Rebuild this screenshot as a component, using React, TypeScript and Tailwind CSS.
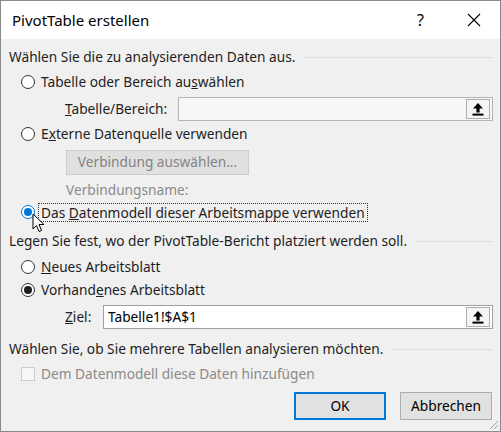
import React from 'react';

const font = { fontFamily: '"Noto Sans", "Open Sans", sans-serif' };

function Radio({ checked, focused }: { checked?: boolean; focused?: boolean }) {
  const ring = focused ? 'border-[#0078d7]' : 'border-[#333333]';
  const dot = focused ? 'bg-[#0078d7]' : 'bg-[#1f1f1f]';
  return (
    <span className={`flex h-[14px] w-[14px] shrink-0 items-center justify-center rounded-full border bg-white ${ring}`}>
      {checked && <span className={`h-[8px] w-[8px] rounded-full ${dot}`} />}
    </span>
  );
}

function UploadBtn() {
  return (
    <div className="mx-[2px] flex h-[20px] w-[24px] items-center justify-center border border-[#adadad] bg-[#f5f5f5]">
      <svg width="12" height="14" viewBox="0 0 12 14">
        <path d="M6 1 L11 6.5 L7.6 6.5 L7.6 10.5 L4.4 10.5 L4.4 6.5 L1 6.5 Z" fill="#000" />
        <rect x="0.5" y="11.6" width="11" height="2" fill="#000" />
      </svg>
    </div>
  );
}

function Header({ text }: { text: string }) {
  return (
    <div className="flex h-[20px] items-center gap-[8px] text-[#1e1e1e]">
      <span className="whitespace-nowrap">{text}</span>
      <span className="h-px flex-1 bg-[#dcdcdc]" />
    </div>
  );
}

function Cursor() {
  return (
    <svg className="absolute left-[31px] top-[212px]" width="13" height="21" viewBox="0 0 13 21">
      <path d="M1 1 L1 16 L4.5 12.5 L7 18.5 L9.5 17.5 L7 11.5 L12 11.5 Z" fill="#fff" stroke="#000" strokeWidth="1" />
    </svg>
  );
}

export default function App() {
  return (
    <div className="relative flex h-[432px] w-[501px] flex-col border border-[#8a8a8a] bg-[#f0f0f0]" style={font}>
      <div className="flex h-[38px] shrink-0 items-center bg-white pl-[11px] text-[15px] text-black">
        <span className="flex-1">PivotTable erstellen</span>
        <span className="w-[30px] text-[16px]">?</span>
        <svg className="mr-[19px] ml-[20px]" width="14" height="14" viewBox="0 0 14 14">
          <path d="M1 1 L13 13 M13 1 L1 13" stroke="#000" strokeWidth="1.1" />
        </svg>
      </div>

      <div className="flex flex-col pl-[8px] pr-[7px] text-[13.7px] text-[#1e1e1e]">
        <div className="mt-[8px]">
          <Header text="Wählen Sie die zu analysierenden Daten aus." />
        </div>

        <div className="mt-[5px] flex h-[20px] items-center gap-[6px] pl-[12px]">
          <Radio />
          <span>Tabelle oder Bereich au<u>s</u>wählen</span>
        </div>

        <div className="mt-[5px] flex h-[24px] items-center pl-[56px]">
          <span className="w-[113px]"><u>T</u>abelle/Bereich:</span>
          <div className="flex h-[24px] flex-1 items-center border border-[#b4b4b4] bg-[#f7f7f7]">
            <span className="flex-1" />
            <UploadBtn />
          </div>
        </div>

        <div className="mt-[3px] flex h-[20px] items-center gap-[6px] pl-[12px]">
          <Radio />
          <span>E<u>x</u>terne Datenquelle verwenden</span>
        </div>

        <div className="mt-[6px] pl-[57px]">
          <div className="flex h-[25px] w-[183px] items-center justify-center border border-[#cccccc] bg-[#e0e0e0] text-[#838383]">
            Verbindung auswählen...
          </div>
        </div>

        <div className="mt-[5px] flex h-[20px] items-center pl-[57px] text-[#8a8a8a]">Verbindungsname:</div>

        <div className="mt-[2px] flex h-[20px] items-center gap-[3px] pl-[12px]">
          <Radio checked focused />
          <span className="border border-dotted border-[#333] px-[2px] leading-[17px]">
            Das <u>D</u>atenmodell dieser Arbeitsmappe verwenden
          </span>
        </div>

        <div className="mt-[9px]">
          <Header text="Legen Sie fest, wo der PivotTable-Bericht platziert werden soll." />
        </div>

        <div className="mt-[6px] flex h-[20px] items-center gap-[6px] pl-[12px]">
          <Radio />
          <span><u>N</u>eues Arbeitsblatt</span>
        </div>

        <div className="mt-[3px] flex h-[20px] items-center gap-[6px] pl-[12px]">
          <Radio checked />
          <span>Vorhand<u>e</u>nes Arbeitsblatt</span>
        </div>

        <div className="mt-[5px] flex h-[24px] items-center pl-[56px]">
          <span className="w-[38px]"><u>Z</u>iel:</span>
          <div className="flex h-[24px] flex-1 items-center border border-[#a0a0a0] bg-white">
            <span className="flex-1 pl-[4px] text-black">Tabelle1!$A$1</span>
            <UploadBtn />
          </div>
        </div>

        <div className="mt-[10px]">
          <Header text="Wählen Sie, ob Sie mehrere Tabellen analysieren möchten." />
        </div>

        <div className="mt-[5px] flex h-[20px] items-center gap-[6px] pl-[12px] text-[#8a8a8a]">
          <span className="h-[14px] w-[14px] shrink-0 border border-[#cccccc] bg-[#f7f7f7]" />
          <span>Dem Datenmodell diese Daten hinzufügen</span>
        </div>

        <div className="mt-[8px] flex justify-end gap-[14px] pr-[1px]">
          <div className="flex h-[28px] w-[92px] items-center justify-center border-2 border-[#0078d7] bg-[#e1e1e1] text-black">OK</div>
          <div className="flex h-[28px] w-[92px] items-center justify-center border border-[#adadad] bg-[#e1e1e1] text-black">Abbrechen</div>
        </div>
      </div>

      <svg className="absolute bottom-[1px] right-[1px]" width="12" height="12" viewBox="0 0 12 12">
        <path d="M11 3 L3 11 M11 7 L7 11" stroke="#a0a0a0" strokeWidth="1" />
      </svg>

      <Cursor />
    </div>
  );
}
